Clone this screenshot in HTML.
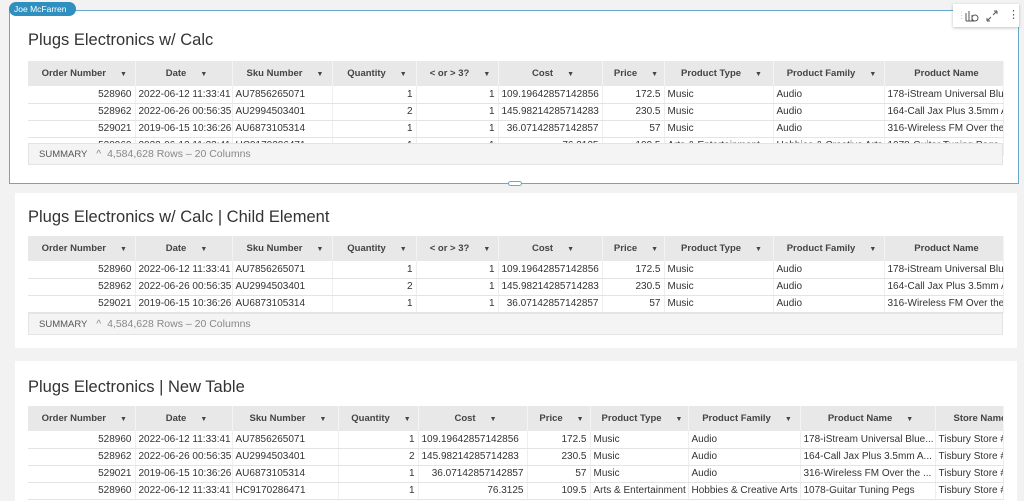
<!DOCTYPE html>
<html><head><style>
*{box-sizing:border-box;margin:0;padding:0}
body{width:1024px;height:493px;background:#f2f2f2;position:relative;overflow:hidden;font-family:"Liberation Sans",sans-serif;color:#333}
.card{position:absolute;background:#fff}
.title{position:absolute;left:28px;font-size:16.5px;color:#333;white-space:nowrap}
table{position:absolute;left:28px;border-collapse:collapse;table-layout:fixed;font-size:10px}
th{height:25px;background:#e8e8e8;font-weight:bold;font-size:9.5px;color:#444;text-align:center;padding-left:6px;border-right:1px solid #f4f4f4;white-space:nowrap;overflow:hidden}
th span{font-size:7px;margin-left:14px}
td{height:17px;border-bottom:1px solid #e4e4e4;border-right:1px solid #eee;padding:0 3px;white-space:nowrap;overflow:hidden;color:#333}
td.r{text-align:right}
.sum{position:absolute;left:28px;background:#f4f4f4;border:1px solid #e4e4e4;font-size:10.5px;color:#888;padding-left:10px;line-height:21px;white-space:nowrap}
.sum b{color:#555;font-weight:normal;font-size:9.5px;margin-right:6px}
</style></head><body>

<div class="card" style="left:9px;top:10px;width:1010px;height:174px;border:1px solid #66a9c8"></div>
<div style="position:absolute;left:9px;top:2px;width:67px;height:14px;background:#2f8fbf;border-radius:7px;color:#fff;font-size:8.5px;line-height:14px;padding-left:5px">Joe McFarren</div>
<div style="position:absolute;left:953px;top:4px;width:66px;height:23px;background:#fff;box-shadow:0 1px 3px rgba(0,0,0,.25);font-size:11px;color:#555;line-height:23px">
<span style="position:absolute;left:4px;color:#ccc;font-size:9px">⋮</span>
<svg style="position:absolute;left:12px;top:6px" width="14" height="12" viewBox="0 0 14 12"><path d="M1 11V3M4 11V1M7 11V5M1 11h8" stroke="#555" fill="none"/><circle cx="10" cy="8" r="3" stroke="#555" fill="#fff"/></svg>
<svg style="position:absolute;left:33px;top:6px" width="12" height="12" viewBox="0 0 12 12"><path d="M1 11l4-4M1 11V8M1 11h3M11 1L7 5M11 1H8M11 1v3" stroke="#555" fill="none"/></svg>
<span style="position:absolute;left:55px">⋮</span></div>
<div style="position:absolute;left:508px;top:181px;width:14px;height:5px;border:1px solid #66a9c8;border-radius:3px;background:#fff"></div>
<div class="title" style="top:31px">Plugs Electronics w/ Calc</div>
<table style="top:61px;width:975px">
<colgroup><col style="width:107px"><col style="width:97px"><col style="width:100px"><col style="width:84px"><col style="width:82px"><col style="width:104px"><col style="width:62px"><col style="width:109px"><col style="width:111px"><col style="width:119px"></colgroup>
<tr><th>Order Number<span>▼</span></th><th>Date<span>▼</span></th><th>Sku Number<span>▼</span></th><th>Quantity<span>▼</span></th><th>&lt; or &gt; 3?<span>▼</span></th><th>Cost<span>▼</span></th><th>Price<span>▼</span></th><th>Product Type<span>▼</span></th><th>Product Family<span>▼</span></th><th>Product Name</th></tr>
<tr><td class="r">528960</td><td>2022-06-12 11:33:41</td><td>AU7856265071</td><td class="r">1</td><td class="r">1</td><td>109.19642857142856</td><td class="r">172.5</td><td>Music</td><td>Audio</td><td>178-iStream Universal Bluetooth</td></tr>
<tr><td class="r">528962</td><td>2022-06-26 00:56:35</td><td>AU2994503401</td><td class="r">2</td><td class="r">1</td><td>145.98214285714283</td><td class="r">230.5</td><td>Music</td><td>Audio</td><td>164-Call Jax Plus 3.5mm Adapter</td></tr>
<tr><td class="r">529021</td><td>2019-06-15 10:36:26</td><td>AU6873105314</td><td class="r">1</td><td class="r">1</td><td class="r">36.07142857142857</td><td class="r">57</td><td>Music</td><td>Audio</td><td>316-Wireless FM Over the Ear</td></tr>
<tr><td class="r">528960</td><td>2022-06-12 11:33:41</td><td>HC9170286471</td><td class="r">1</td><td class="r">1</td><td class="r">76.3125</td><td class="r">109.5</td><td>Arts &amp; Entertainment</td><td>Hobbies &amp; Creative Arts</td><td>1078-Guitar Tuning Pegs</td></tr>
</table>
<div class="sum" style="top:143px;width:975px;height:22px"><b>SUMMARY</b> ^ &nbsp;4,584,628 Rows – 20 Columns</div>

<div class="card" style="left:15px;top:193px;width:1002px;height:155px"></div>
<div class="title" style="top:208px">Plugs Electronics w/ Calc | Child Element</div>
<table style="top:236px;width:975px">
<colgroup><col style="width:107px"><col style="width:97px"><col style="width:100px"><col style="width:84px"><col style="width:82px"><col style="width:104px"><col style="width:62px"><col style="width:109px"><col style="width:111px"><col style="width:119px"></colgroup>
<tr><th>Order Number<span>▼</span></th><th>Date<span>▼</span></th><th>Sku Number<span>▼</span></th><th>Quantity<span>▼</span></th><th>&lt; or &gt; 3?<span>▼</span></th><th>Cost<span>▼</span></th><th>Price<span>▼</span></th><th>Product Type<span>▼</span></th><th>Product Family<span>▼</span></th><th>Product Name</th></tr>
<tr><td class="r">528960</td><td>2022-06-12 11:33:41</td><td>AU7856265071</td><td class="r">1</td><td class="r">1</td><td>109.19642857142856</td><td class="r">172.5</td><td>Music</td><td>Audio</td><td>178-iStream Universal Bluetooth</td></tr>
<tr><td class="r">528962</td><td>2022-06-26 00:56:35</td><td>AU2994503401</td><td class="r">2</td><td class="r">1</td><td>145.98214285714283</td><td class="r">230.5</td><td>Music</td><td>Audio</td><td>164-Call Jax Plus 3.5mm Adapter</td></tr>
<tr><td class="r">529021</td><td>2019-06-15 10:36:26</td><td>AU6873105314</td><td class="r">1</td><td class="r">1</td><td class="r">36.07142857142857</td><td class="r">57</td><td>Music</td><td>Audio</td><td>316-Wireless FM Over the Ear</td></tr>
</table>
<div class="sum" style="top:313px;width:975px;height:22px"><b>SUMMARY</b> ^ &nbsp;4,584,628 Rows – 20 Columns</div>

<div class="card" style="left:15px;top:361px;width:1002px;height:140px"></div>
<div class="title" style="top:378px">Plugs Electronics | New Table</div>
<table style="top:406px;width:975px">
<colgroup><col style="width:107px"><col style="width:97px"><col style="width:106px"><col style="width:80px"><col style="width:109px"><col style="width:63px"><col style="width:98px"><col style="width:112px"><col style="width:135px"><col style="width:68px"></colgroup>
<tr><th>Order Number<span>▼</span></th><th>Date<span>▼</span></th><th>Sku Number<span>▼</span></th><th>Quantity<span>▼</span></th><th>Cost<span>▼</span></th><th>Price<span>▼</span></th><th>Product Type<span>▼</span></th><th>Product Family<span>▼</span></th><th>Product Name<span>▼</span></th><th style="text-align:left;padding-left:18px">Store Name</th></tr>
<tr><td class="r">528960</td><td>2022-06-12 11:33:41</td><td>AU7856265071</td><td class="r">1</td><td>109.19642857142856</td><td class="r">172.5</td><td>Music</td><td>Audio</td><td>178-iStream Universal Blue...</td><td>Tisbury Store #</td></tr>
<tr><td class="r">528962</td><td>2022-06-26 00:56:35</td><td>AU2994503401</td><td class="r">2</td><td>145.98214285714283</td><td class="r">230.5</td><td>Music</td><td>Audio</td><td>164-Call Jax Plus 3.5mm A...</td><td>Tisbury Store #</td></tr>
<tr><td class="r">529021</td><td>2019-06-15 10:36:26</td><td>AU6873105314</td><td class="r">1</td><td class="r">36.07142857142857</td><td class="r">57</td><td>Music</td><td>Audio</td><td>316-Wireless FM Over the ...</td><td>Tisbury Store #</td></tr>
<tr><td class="r">528960</td><td>2022-06-12 11:33:41</td><td>HC9170286471</td><td class="r">1</td><td class="r">76.3125</td><td class="r">109.5</td><td>Arts &amp; Entertainment</td><td>Hobbies &amp; Creative Arts</td><td>1078-Guitar Tuning Pegs</td><td>Tisbury Store #</td></tr>
</table>
</body></html>
